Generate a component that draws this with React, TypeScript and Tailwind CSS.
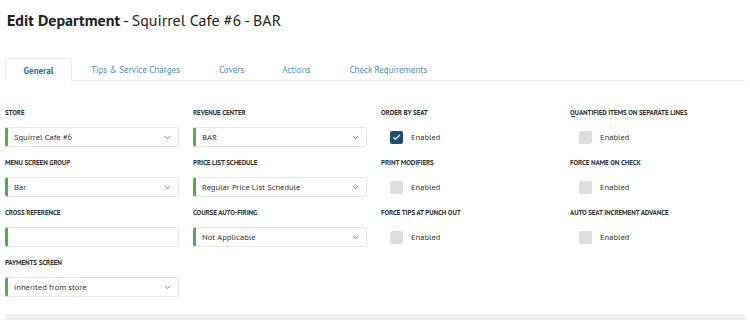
import { ChevronDown, Check } from "lucide-react";

const tabs = ["General", "Tips & Service Charges", "Covers", "Actions", "Check Requirements"];

function Label({ children }: { children: string }) {
  return (
    <div className="h-[10px] text-[7px] font-bold uppercase leading-[10px] tracking-[-0.1px] text-[#333]">
      {children}
    </div>
  );
}

function Select({ value }: { value?: string }) {
  return (
    <div className="flex h-[20px] w-[174px] items-center justify-between rounded-[3px] border border-[#e6e6e6] border-l-[3px] border-l-[#4caf50] bg-white pl-[6px] pr-[6px]">
      <span className="text-[8.5px] text-[#333]">{value}</span>
      {value !== undefined && <ChevronDown className="h-[9px] w-[9px] text-[#555]" strokeWidth={2} />}
    </div>
  );
}

function Toggle({ checked }: { checked?: boolean }) {
  return (
    <div className="flex h-[20px] items-center pl-[9px]">
      <div
        className={`flex h-[13px] w-[13px] items-center justify-center rounded-[2px] ${
          checked ? "bg-[#1f4e73]" : "bg-[#dedede]"
        }`}
      >
        {checked && <Check className="h-[9px] w-[9px] text-white" strokeWidth={3} />}
      </div>
      <span className="ml-[8px] text-[8.5px] text-[#333]">Enabled</span>
    </div>
  );
}

function Field({ label, children }: { label: string; children: React.ReactNode }) {
  return (
    <div className="flex flex-col gap-[9px]">
      <Label>{label}</Label>
      {children}
    </div>
  );
}

export default function App() {
  return (
    <div
      className="h-[320px] w-[750px] overflow-hidden bg-white"
      style={{ fontFamily: '"PT Sans", "Noto Sans", "Liberation Sans", sans-serif' }}
    >
      <h1 className="px-[7px] pt-[9px] text-[16px] leading-[22px] text-[#222]">
        <span className="font-bold">Edit Department</span> - Squirrel Cafe #6 - BAR
      </h1>
      <div className="mx-[5px] mt-[27px] flex h-[23px] border-b border-[#ececec]">
        {tabs.map((t, i) => (
          <div
            key={t}
            className={`flex items-center pt-[2px] text-[9px] ${
              i === 0
                ? "-mb-px w-[67px] justify-center rounded-t-[3px] border border-b-0 border-[#ececec] bg-white font-bold text-[#2a6f9e]"
                : "text-[#4a8fbf]"
            } ${i === 1 ? "ml-[19px]" : ""} ${i === 2 ? "ml-[39px]" : ""} ${i === 3 ? "ml-[38px]" : ""} ${
              i === 4 ? "ml-[39px]" : ""
            }`}
          >
            {t}
          </div>
        ))}
      </div>
      <div className="mt-[27px] grid grid-cols-[188px_188px_189px_1fr] gap-y-[11px] px-[5px]">
        <Field label="Store">
          <Select value="Squirrel Cafe #6" />
        </Field>
        <Field label="Revenue Center">
          <Select value="BAR" />
        </Field>
        <Field label="Order by Seat">
          <Toggle checked />
        </Field>
        <Field label="Quantified Items on Separate Lines">
          <Toggle />
        </Field>

        <Field label="Menu Screen Group">
          <Select value="Bar" />
        </Field>
        <Field label="Price List Schedule">
          <Select value="Regular Price List Schedule" />
        </Field>
        <Field label="Print Modifiers">
          <Toggle />
        </Field>
        <Field label="Force Name on Check">
          <Toggle />
        </Field>

        <Field label="Cross Reference">
          <Select />
        </Field>
        <Field label="Course Auto-Firing">
          <Select value="Not Applicable" />
        </Field>
        <Field label="Force Tips at Punch Out">
          <Toggle />
        </Field>
        <Field label="Auto Seat Increment Advance">
          <Toggle />
        </Field>

        <Field label="Payments Screen">
          <Select value="inherited from store" />
        </Field>
      </div>
      <div className="mx-[5px] mt-[17px] h-[10px] bg-[#efefef]" />
    </div>
  );
}
